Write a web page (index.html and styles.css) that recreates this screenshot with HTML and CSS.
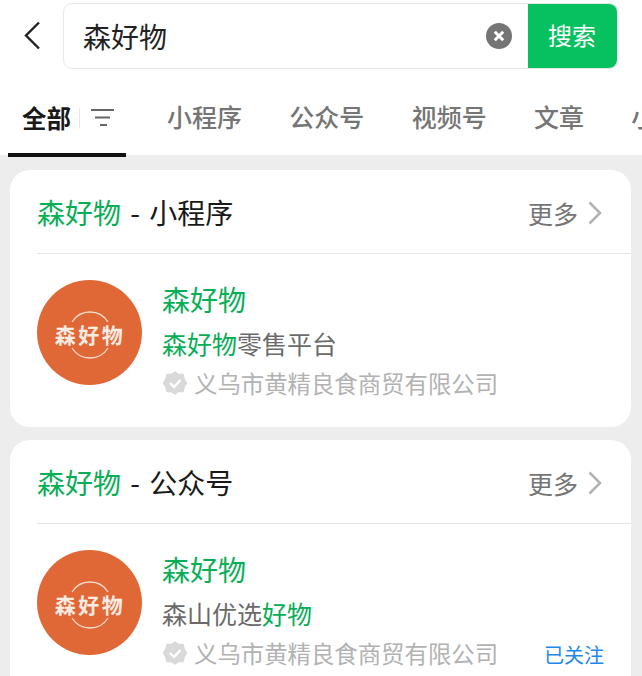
FILE: index.html
```html
<!DOCTYPE html>
<html lang="zh-CN">

<head>
  <meta charset="UTF-8" />
  <title>森好物 - 搜索</title>
  <link rel="stylesheet" href="styles.css">
</head>

<body>
  <div class="search_bar">
    <svg class="back_icon" width="16" height="30" viewBox="0 0 16 30">
      <path d="M15 1.5 L2 14.5 L15 27.5" fill="none" stroke="#222" stroke-width="2.4" />
    </svg>
    <div class="search_box">
      <span class="search_text">森好物</span>
      <svg class="clear_icon" width="26" height="26" viewBox="0 0 26 26">
        <circle cx="13" cy="13" r="13" fill="#757575" />
        <path d="M8.8 8.8 L17.2 17.2 M17.2 8.8 L8.8 17.2" stroke="#fff" stroke-width="3" />
      </svg>
      <div class="search_button">搜索</div>
    </div>
  </div>

  <div class="tabs">
    <div class="tab tab_active">
      <span>全部</span>
      <i class="tab_sep"></i>
      <svg width="24" height="18" viewBox="0 0 24 18">
        <path d="M0 1 H23 M4 8.5 H19 M9 16 H16" stroke="#666" stroke-width="2" />
      </svg>
    </div>
    <div class="tab">小程序</div>
    <div class="tab">公众号</div>
    <div class="tab">视频号</div>
    <div class="tab">文章</div>
    <div class="tab">小说</div>
  </div>

  <div class="card">
    <div class="card_head">
      <div class="card_title"><em>森好物</em> - 小程序</div>
      <div class="more">更多
        <svg width="14" height="24" viewBox="0 0 14 24">
          <path d="M1.5 1.5 L12 12 L1.5 22.5" fill="none" stroke="#b2b2b2" stroke-width="2.5" />
        </svg>
      </div>
    </div>
    <div class="item">
      <svg class="logo" width="105" height="105" viewBox="0 0 105 105">
        <circle cx="52.5" cy="52.5" r="52.5" fill="#e06736" />
        <path d="M35 42 A21.2 21.2 0 0 1 71 42 M35 68 A21.2 21.2 0 0 0 71 68" fill="none" stroke="#f3d9c9" stroke-width="1.3" />
        <text class="logo_text" x="53" y="63" text-anchor="middle">森好物</text>
      </svg>
      <div class="item_info">
        <div class="item_name">森好物</div>
        <div class="item_desc"><em>森好物</em>零售平台</div>
        <div class="item_owner">
          <svg class="badge" width="24" height="24" viewBox="0 0 24 24">
            <path d="M12 1 L15.5 3.5 L20 3.5 L21 8 L23.5 12 L21 16 L20 20.5 L15.5 20.5 L12 23 L8.5 20.5 L4 20.5 L3 16 L0.5 12 L3 8 L4 3.5 L8.5 3.5 Z" fill="#d9d9d9" stroke="#d9d9d9" stroke-width="1.5" stroke-linejoin="round" />
            <path d="M7 12 L11 16 L17.5 9" fill="none" stroke="#fff" stroke-width="2.4" />
          </svg>
          <span>义乌市黄精良食商贸有限公司</span>
        </div>
      </div>
    </div>
  </div>

  <div class="card">
    <div class="card_head">
      <div class="card_title"><em>森好物</em> - 公众号</div>
      <div class="more">更多
        <svg width="14" height="24" viewBox="0 0 14 24">
          <path d="M1.5 1.5 L12 12 L1.5 22.5" fill="none" stroke="#b2b2b2" stroke-width="2.5" />
        </svg>
      </div>
    </div>
    <div class="item">
      <svg class="logo" width="105" height="105" viewBox="0 0 105 105">
        <circle cx="52.5" cy="52.5" r="52.5" fill="#e06736" />
        <path d="M35 42 A21.2 21.2 0 0 1 71 42 M35 68 A21.2 21.2 0 0 0 71 68" fill="none" stroke="#f3d9c9" stroke-width="1.3" />
        <text class="logo_text" x="53" y="63" text-anchor="middle">森好物</text>
      </svg>
      <div class="item_info">
        <div class="item_name">森好物</div>
        <div class="item_desc">森山优选<em>好物</em></div>
        <div class="item_owner">
          <svg class="badge" width="24" height="24" viewBox="0 0 24 24">
            <path d="M12 1 L15.5 3.5 L20 3.5 L21 8 L23.5 12 L21 16 L20 20.5 L15.5 20.5 L12 23 L8.5 20.5 L4 20.5 L3 16 L0.5 12 L3 8 L4 3.5 L8.5 3.5 Z" fill="#d9d9d9" stroke="#d9d9d9" stroke-width="1.5" stroke-linejoin="round" />
            <path d="M7 12 L11 16 L17.5 9" fill="none" stroke="#fff" stroke-width="2.4" />
          </svg>
          <span>义乌市黄精良食商贸有限公司</span>
          <span class="followed">已关注</span>
        </div>
      </div>
    </div>
  </div>
</body>

</html>
```

FILE: styles.css
```css
html,
body {
  height: 100%;
  overflow: hidden;
}

body {
  margin: 0;
  background-color: #ededed;
  font-family: "Noto Sans CJK SC", "Noto Sans", sans-serif;
  color: #191919;
}

em {
  font-style: normal;
  color: #06ae56;
}

.search_bar {
  display: flex;
  align-items: center;
  height: 72px;
  padding-left: 24px;
  box-sizing: border-box;
  background-color: #fff;
}

.back_icon {
  flex: none;
  margin-right: 23px;
}

.search_box {
  display: flex;
  align-items: center;
  width: 555px;
  height: 66px;
  box-sizing: border-box;
  margin-top: -1px;
  border: 1px solid #e8e8e8;
  border-radius: 9px;
  overflow: hidden;
}

.search_text {
  flex: 1;
  padding-left: 19px;
  font-size: 28px;
  color: #222;
}

.clear_icon {
  flex: none;
  margin-right: 16px;
}

.search_button {
  flex: none;
  width: 90px;
  height: 66px;
  padding-right: 2px;
  box-sizing: border-box;
  margin: -1px -1px -1px 0;
  background-color: #07c160;
  color: #fff;
  font-size: 24px;
  line-height: 64px;
  text-align: center;
}

.tabs {
  display: flex;
  height: 83px;
  background-color: #fff;
  white-space: nowrap;
}

.tab {
  flex: none;
  margin-right: 47.3px;
  padding-top: 26px;
  font-size: 25px;
  line-height: 36px;
  font-weight: 500;
  color: #757575;
}

.tab_active {
  display: flex;
  align-items: center;
  width: 118px;
  height: 85px;
  box-sizing: border-box;
  margin-left: 8px;
  margin-right: 41px;
  padding: 11px 0 0 14px;
  border-bottom: 4px solid #111;
  color: #191919;
  font-weight: 700;
}

.tab_active span {
  font-size: 24.5px;
}

.tab_sep {
  width: 1px;
  height: 20px;
  margin: 0 11px 0 8px;
  background-color: #e5e5e5;
}

.card {
  margin: 15px 11px 0 10px;
  padding-left: 27px;
  background-color: #fff;
  border-radius: 20px;
}

.card + .card {
  margin-top: 13px;
}

.card_head {
  display: flex;
  align-items: center;
  justify-content: space-between;
  height: 83px;
  padding-right: 29px;
  border-bottom: 1px solid #e5e5e5;
}

.card_title {
  padding-top: 1px;
  font-size: 28px;
  word-spacing: 3px;
}

.more {
  display: flex;
  align-items: center;
  gap: 10px;
  padding-top: 2px;
  font-size: 25px;
  color: #757575;
}

.item {
  display: flex;
  gap: 20px;
  height: 173px;
  padding-top: 26px;
  box-sizing: border-box;
}

.logo {
  flex: none;
}

.logo_text {
  font-size: 21px;
  font-weight: 700;
  letter-spacing: 2.5px;
  fill: #f8ebe2;
}

.item_info {
  flex: 1;
  padding-right: 27px;
}

.item_name {
  height: 44px;
  margin-top: -3px;
  font-size: 28px;
  line-height: 44px;
  color: #06ae56;
}

.item_desc {
  height: 42px;
  padding-top: 1px;
  box-sizing: border-box;
  font-size: 25px;
  line-height: 42px;
  color: #6a6a6a;
}

.item_owner {
  display: flex;
  align-items: center;
  height: 40px;
  padding-left: 1px;
  font-size: 23.4px;
  color: #b2b2b2;
}

.badge {
  flex: none;
  margin-right: 7px;
}

.followed {
  margin-left: auto;
  padding-top: 2px;
  font-size: 20px;
  color: #1e88e8;
}
```
